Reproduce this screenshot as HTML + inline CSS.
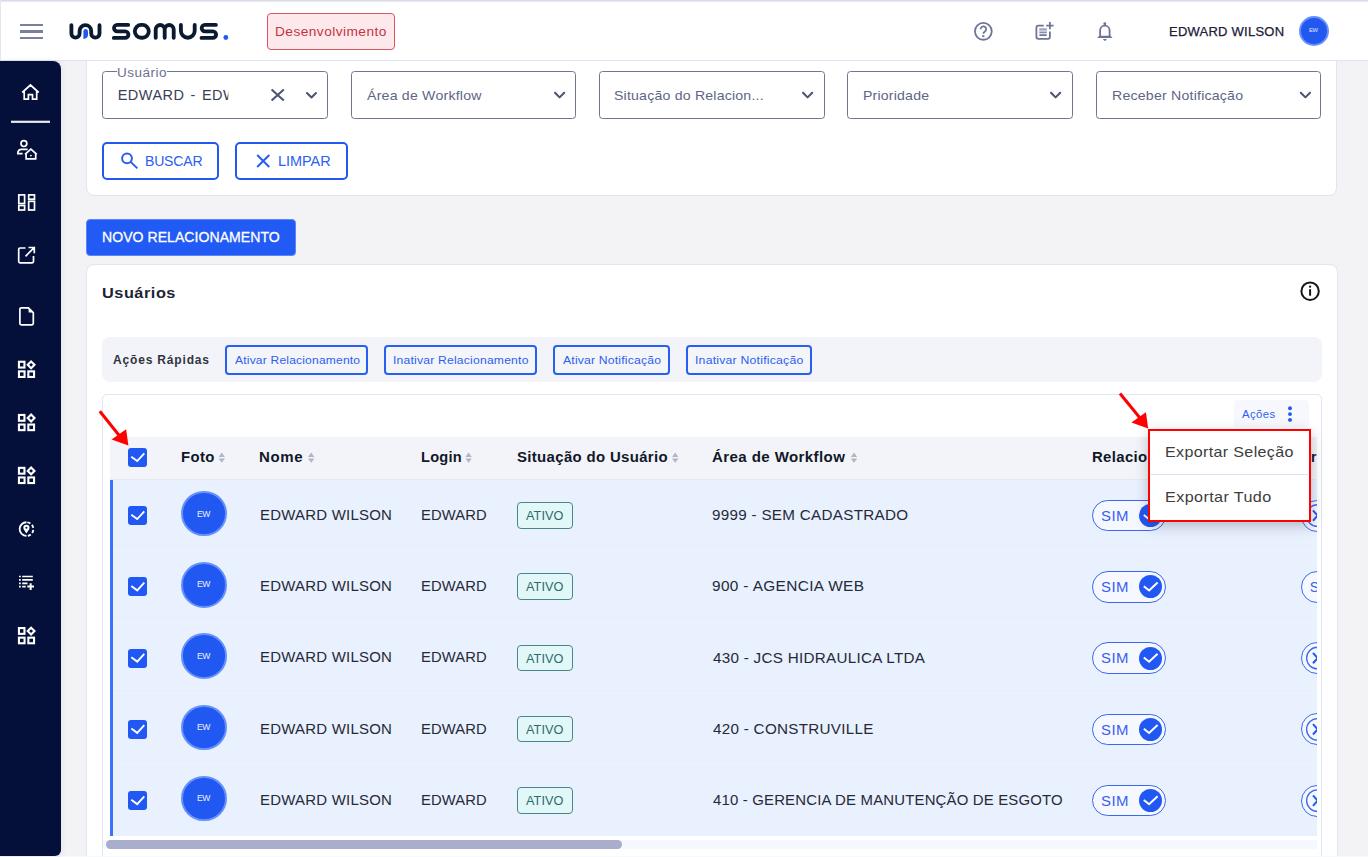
<!DOCTYPE html>
<html><head><meta charset="utf-8">
<style>
*{box-sizing:border-box;margin:0;padding:0}
html,body{width:1368px;height:857px;overflow:hidden;background:#f3f3f6;font-family:"Liberation Sans",sans-serif}
.a{position:absolute}
.t{position:absolute;white-space:nowrap;line-height:1}
svg{position:absolute;overflow:visible}
.hb{position:absolute;left:20px;width:23px;height:2.4px;background:#7a7f9e}
.card{position:absolute;background:#fff;border:1px solid #e0e4f5;border-radius:8px}
.sel{position:absolute;border:1px solid #6e7593;border-radius:3.5px;background:#fff;height:47.5px;top:71px;width:226px}
.btno{position:absolute;border:2px solid #2158f0;border-radius:5px;background:#fff}
.qb{position:absolute;top:345px;height:29.5px;border:2px solid #2660f3;border-radius:4px;background:#f4f5f9}
.row{position:absolute;left:110px;width:1207px;background:#e9f0fe}
.rbar{position:absolute;left:110px;width:3px;background:#3d72f7}
.cb{position:absolute;left:128px;width:19px;height:19px;border-radius:3px;background:#2158f3}
.av{position:absolute;left:181px;width:45.5px;height:45.5px;border-radius:50%;background:#2158f2;border:2px solid #6591f8}
.badge{position:absolute;left:517px;width:55.5px;height:26.5px;border:1px solid #4b8686;border-radius:4px;background:#e2f7f7}
.tog{position:absolute;left:1092px;width:74px;height:31.5px;border:1px solid #3a68f2;border-radius:16px;background:#f5f8ff}
.tgc{position:absolute;left:1138.5px;width:23px;height:23px;border-radius:50%;background:#2158f3}

</style></head><body>
<!-- ===== card 1 (filters) ===== -->
<div class="card" style="left:86px;top:-20px;width:1251px;height:215.5px"></div>
<div class="sel" style="left:102px"></div>
<div class="a" style="left:116.5px;top:69.5px;width:50.5px;height:4px;background:#fff"></div>
<div class="t" style="left:117.30px;top:66.80px;font-size:12.3px;color:#6b7290;letter-spacing:0.418px;transform:scaleX(1.1010);transform-origin:0 0;">Usuário</div>
<div class="t" style="left:117.65px;top:87.75px;font-size:14.5px;color:#3a3f55;letter-spacing:0.5px;word-spacing:1.5px;clip-path:inset(-4px calc(100% - 110.75px) -4px -4px);">EDWARD - EDWARD WILSON</div>
<svg style="left:0;top:0" width="1" height="1">
<g fill="none" stroke="#4b5170" stroke-width="2" stroke-linecap="butt">
<path d="M271.6,89.4 L283.8,100.6 M283.8,89.4 L271.6,100.6"/>
</g>
<g fill="none" stroke="#4b5170" stroke-width="2" stroke-linecap="round" stroke-linejoin="round">
<path d="M307,93 L311.5,97.5 L316,93"/>
</g>
</svg>
<div class="sel" style="left:350.5px;width:225.5px"></div>
<div class="t" style="left:366.60px;top:89.12px;font-size:13.5px;color:#5d6585;letter-spacing:0.208px;transform:scaleX(1.0460);transform-origin:0 0;">Área de Workflow</div>
<div class="sel" style="left:599px"></div>
<div class="t" style="left:614.31px;top:89.17px;font-size:13.5px;color:#5d6585;letter-spacing:0.185px;transform:scaleX(1.0467);transform-origin:0 0;">Situação do Relacion...</div>
<div class="sel" style="left:847px"></div>
<div class="t" style="left:863.16px;top:89.17px;font-size:13.5px;color:#5d6585;letter-spacing:0.187px;transform:scaleX(1.0440);transform-origin:0 0;">Prioridade</div>
<div class="sel" style="left:1095.5px;width:225.5px"></div>
<div class="t" style="left:1111.55px;top:89.18px;font-size:13.5px;color:#5d6585;letter-spacing:0.200px;transform:scaleX(1.0470);transform-origin:0 0;">Receber Notificação</div>
<svg style="left:0;top:0" width="1" height="1">
<g fill="none" stroke="#4b5170" stroke-width="2" stroke-linecap="round" stroke-linejoin="round">
<path d="M555,92.8 L559.6,97.4 L564.2,92.8"/>
<path d="M803,92.8 L807.6,97.4 L812.2,92.8"/>
<path d="M1051,92.8 L1055.6,97.4 L1060.2,92.8"/>
<path d="M1300.8,92.8 L1305.4,97.4 L1310,92.8"/>
</g>
</svg>

<div class="btno" style="left:102px;top:142px;width:117px;height:37.5px"></div>
<div class="t" style="left:145.09px;top:153.67px;font-size:14.5px;color:#2d5ff0;letter-spacing:-0.231px;transform:scaleX(0.9713);transform-origin:0 0;">BUSCAR</div>
<div class="btno" style="left:235px;top:142px;width:112.5px;height:37.5px"></div>
<div class="t" style="left:277.75px;top:153.67px;font-size:14.5px;color:#2d5ff0;letter-spacing:-0.016px;transform:scaleX(0.9976);transform-origin:0 0;">LIMPAR</div>
<svg style="left:0;top:0" width="1" height="1">
<g fill="none" stroke="#2a5cf0" stroke-width="2" stroke-linecap="butt">
<circle cx="127" cy="158.3" r="4.9"/>
<path d="M130.6,161.9 L137.4,168.4"/>
<path d="M257.2,155 L269.3,167 M269.3,155 L257.2,167"/>
</g>
</svg>

<!-- ===== NOVO btn ===== -->
<div class="a" style="left:86px;top:218.5px;width:210px;height:37.5px;background:#225af5;border:1px solid #5b86f7;border-radius:4px"></div>
<div class="t" style="left:101.84px;top:230.05px;font-size:14px;color:#ffffff;letter-spacing:0.031px;transform:scaleX(1.0048);transform-origin:0 0;-webkit-text-stroke:0.3px #fff;">NOVO RELACIONAMENTO</div>

<!-- ===== card 2 ===== -->
<div class="card" style="left:86px;top:264px;width:1251.5px;height:620px"></div>
<div class="t" style="left:101.51px;top:285.18px;font-size:15px;font-weight:700;color:#1e2433;letter-spacing:0.478px;transform:scaleX(1.0874);transform-origin:0 0;">Usuários</div>
<svg style="left:0;top:0" width="1" height="1">
<circle cx="1310.1" cy="291.2" r="8.7" fill="none" stroke="#151515" stroke-width="2"/>
<rect x="1309.1" y="289.2" width="2" height="6.5" fill="#151515"/>
<circle cx="1310.1" cy="286.7" r="1.15" fill="#151515"/>
</svg>

<div class="a" style="left:102px;top:337.3px;width:1219.5px;height:45px;background:#f3f4f9;border-radius:8px"></div>
<div class="t" style="left:113.05px;top:353.88px;font-size:12px;font-weight:700;color:#30343f;letter-spacing:0.829px;">Ações Rápidas</div>
<div class="qb" style="left:225.2px;width:143.3px"></div>
<div class="t" style="left:234.60px;top:355.20px;font-size:11.5px;color:#2d5ff0;letter-spacing:0.178px;transform:scaleX(1.0487);transform-origin:0 0;">Ativar Relacionamento</div>
<div class="qb" style="left:384px;width:153.4px"></div>
<div class="t" style="left:393.14px;top:355.20px;font-size:11.5px;color:#2d5ff0;letter-spacing:0.195px;transform:scaleX(1.0553);transform-origin:0 0;">Inativar Relacionamento</div>
<div class="qb" style="left:553.2px;width:116.7px"></div>
<div class="t" style="left:562.90px;top:355.20px;font-size:11.5px;color:#2d5ff0;letter-spacing:0.187px;transform:scaleX(1.0566);transform-origin:0 0;">Ativar Notificação</div>
<div class="qb" style="left:686.2px;width:125.4px"></div>
<div class="t" style="left:694.64px;top:355.20px;font-size:11.5px;color:#2d5ff0;letter-spacing:0.205px;transform:scaleX(1.0645);transform-origin:0 0;">Inativar Notificação</div>

<!-- table container -->
<div class="a" style="left:102px;top:394.4px;width:1219.5px;height:500px;background:#fff;border:1px solid #dfe5f6;border-radius:5px"></div>
<div class="a" style="left:1234px;top:399.6px;width:75px;height:27.4px;background:#f6f8fd;border-radius:4px"></div>
<div class="t" style="left:1242.00px;top:409.19px;font-size:10.5px;color:#2d5ff0;letter-spacing:0.356px;transform:scaleX(1.0803);transform-origin:0 0;">Ações</div>
<svg style="left:0;top:0" width="1" height="1">
<g fill="#2158f3"><circle cx="1290" cy="408.3" r="1.95"/><circle cx="1290" cy="414.1" r="1.95"/><circle cx="1290" cy="419.9" r="1.95"/></g>
</svg>

<!-- header row -->
<div class="a" style="left:110px;top:437px;width:1207px;height:42.5px;background:#f3f4f9;border-bottom:1px solid #e5e9f5"></div>
<div class="cb" style="top:448px"></div>
<svg style="left:0;top:0" width="1" height="1">
<path d="M131.3,456.75 L137.2,461.05 L144.3,453.3" fill="none" stroke="#fff" stroke-width="1.9"/>
</svg>
<div class="t" style="left:180.54px;top:449.85px;font-size:14px;font-weight:700;color:#111827;letter-spacing:0.382px;transform:scaleX(1.0637);transform-origin:0 0;">Foto</div>
<div class="t" style="left:259.43px;top:449.85px;font-size:14px;font-weight:700;color:#111827;letter-spacing:0.571px;transform:scaleX(1.0736);transform-origin:0 0;">Nome</div>
<div class="t" style="left:420.66px;top:449.85px;font-size:14px;font-weight:700;color:#111827;letter-spacing:0.245px;transform:scaleX(1.0422);transform-origin:0 0;">Login</div>
<div class="t" style="left:516.87px;top:449.85px;font-size:14px;font-weight:700;color:#111827;letter-spacing:0.315px;transform:scaleX(1.0677);transform-origin:0 0;">Situação do Usuário</div>
<div class="t" style="left:712.46px;top:449.85px;font-size:14px;font-weight:700;color:#111827;letter-spacing:0.369px;transform:scaleX(1.0761);transform-origin:0 0;">Área de Workflow</div>
<div class="t" style="left:1091.83px;top:449.65px;font-size:14px;font-weight:700;color:#111827;letter-spacing:0.329px;transform:scaleX(1.0653);transform-origin:0 0;">Relacionamento</div>
<div class="t" style="left:1311.00px;top:449.65px;font-size:14px;font-weight:700;color:#111827;">r</div>
<svg style="left:0;top:0" width="1" height="1">
<g fill="#aeb6c8">
<path d="M218.6,457 L221.8,452.6 L225,457 Z M218.6,458.4 L221.8,462.8 L225,458.4 Z"/>
<path d="M308,457 L311.2,452.6 L314.4,457 Z M308,458.4 L311.2,462.8 L314.4,458.4 Z"/>
<path d="M465.4,457 L468.6,452.6 L471.8,457 Z M465.4,458.4 L468.6,462.8 L471.8,458.4 Z"/>
<path d="M672,457 L675.2,452.6 L678.4,457 Z M672,458.4 L675.2,462.8 L678.4,458.4 Z"/>
<path d="M850.8,457 L854,452.6 L857.2,457 Z M850.8,458.4 L854,462.8 L857.2,458.4 Z"/>
</g>
</svg>

<div class="row" style="top:479.50px;height:71.26px"></div>
<div class="rbar" style="top:479.50px;height:71.56px"></div>
<div class="cb" style="top:506.05px"></div>
<svg style="left:0;top:0" width="1" height="1"><path d="M131.3,514.80 L137.2,519.10 L144.3,511.35" fill="none" stroke="#fff" stroke-width="1.9"/></svg>
<div class="av" style="top:490.85px"></div>
<div class="t" style="left:196.58px;top:509.60px;font-size:9px;color:#eef2fe;letter-spacing:-0.440px;transform:scaleX(0.9542);transform-origin:0 0;">EW</div>
<div class="t" style="left:259.51px;top:508.20px;font-size:14.5px;color:#262a38;letter-spacing:0.215px;transform:scaleX(1.0325);transform-origin:0 0;">EDWARD WILSON</div>
<div class="t" style="left:421.23px;top:508.20px;font-size:14.5px;color:#262a38;letter-spacing:0.142px;transform:scaleX(1.0174);transform-origin:0 0;">EDWARD</div>
<div class="badge" style="top:502.20px"></div>
<div class="t" style="left:526.40px;top:509.95px;font-size:12.5px;color:#2d6b6b;letter-spacing:0.089px;transform:scaleX(1.0150);transform-origin:0 0;">ATIVO</div>
<div class="t" style="left:712.21px;top:508.29px;font-size:14.5px;color:#262a38;letter-spacing:0.281px;transform:scaleX(1.0492);transform-origin:0 0;">9999 - SEM CADASTRADO</div>
<div class="tog" style="top:499.80px"></div>
<div class="tgc" style="top:504.05px"></div>
<svg style="left:0;top:0" width="1" height="1"><path d="M1143.8,515.05 L1149.1,519.25 L1157.6,511.15" fill="none" stroke="#fff" stroke-width="2"/></svg>
<div class="t" style="left:1100.80px;top:508.70px;font-size:14px;color:#3a5ef0;letter-spacing:0.469px;transform:scaleX(1.0652);transform-origin:0 0;">SIM</div>
<div class="a" style="left:1301.2px;top:499.60px;width:60px;height:32px;border:1px solid #3a68f2;border-radius:16px;background:#f5f8ff;clip-path:inset(-2px 43.8px -2px -2px)"></div>
<svg style="left:0;top:0;clip-path:inset(-1000px -1317px -1000px -1000px)" width="1" height="1"><circle cx="1317.4" cy="515.55" r="10.8" fill="none" stroke="#3a68f2" stroke-width="1.3"/><path d="M1313,510.35 L1317.6,515.55 L1313,520.75" fill="none" stroke="#2158f3" stroke-width="2"/></svg>
<div class="row" style="top:550.76px;height:71.26px"></div>
<div class="a" style="left:113px;top:550.26px;width:1204px;height:1px;background:#eef3fe"></div>
<div class="rbar" style="top:550.76px;height:71.56px"></div>
<div class="cb" style="top:577.31px"></div>
<svg style="left:0;top:0" width="1" height="1"><path d="M131.3,586.06 L137.2,590.36 L144.3,582.61" fill="none" stroke="#fff" stroke-width="1.9"/></svg>
<div class="av" style="top:562.11px"></div>
<div class="t" style="left:196.58px;top:580.33px;font-size:9px;color:#eef2fe;letter-spacing:-0.440px;transform:scaleX(0.9542);transform-origin:0 0;">EW</div>
<div class="t" style="left:259.51px;top:579.08px;font-size:14.5px;color:#262a38;letter-spacing:0.215px;transform:scaleX(1.0325);transform-origin:0 0;">EDWARD WILSON</div>
<div class="t" style="left:421.23px;top:579.08px;font-size:14.5px;color:#262a38;letter-spacing:0.142px;transform:scaleX(1.0174);transform-origin:0 0;">EDWARD</div>
<div class="badge" style="top:573.46px"></div>
<div class="t" style="left:526.40px;top:581.32px;font-size:12.5px;color:#2d6b6b;letter-spacing:0.089px;transform:scaleX(1.0150);transform-origin:0 0;">ATIVO</div>
<div class="t" style="left:712.20px;top:579.34px;font-size:14.5px;color:#262a38;letter-spacing:0.331px;transform:scaleX(1.0619);transform-origin:0 0;">900 - AGENCIA WEB</div>
<div class="tog" style="top:571.06px"></div>
<div class="tgc" style="top:575.31px"></div>
<svg style="left:0;top:0" width="1" height="1"><path d="M1143.8,586.31 L1149.1,590.51 L1157.6,582.41" fill="none" stroke="#fff" stroke-width="2"/></svg>
<div class="t" style="left:1100.80px;top:579.96px;font-size:14px;color:#3a5ef0;letter-spacing:0.469px;transform:scaleX(1.0652);transform-origin:0 0;">SIM</div>
<div class="a" style="left:1301px;top:570.76px;width:60px;height:32px;border:1px solid #3a68f2;border-radius:16px;background:#f5f8ff;clip-path:inset(-2px 44px -2px -2px)"></div>
<div class="t" style="left:1309.75px;top:580.03px;font-size:14px;color:#3a5ef0;clip-path:inset(-4px calc(100% - 7.25px) -4px -4px);">SIM</div>
<div class="row" style="top:622.02px;height:71.26px"></div>
<div class="a" style="left:113px;top:621.52px;width:1204px;height:1px;background:#eef3fe"></div>
<div class="rbar" style="top:622.02px;height:71.56px"></div>
<div class="cb" style="top:648.57px"></div>
<svg style="left:0;top:0" width="1" height="1"><path d="M131.3,657.32 L137.2,661.62 L144.3,653.87" fill="none" stroke="#fff" stroke-width="1.9"/></svg>
<div class="av" style="top:633.37px"></div>
<div class="t" style="left:196.58px;top:652.00px;font-size:9px;color:#eef2fe;letter-spacing:-0.440px;transform:scaleX(0.9542);transform-origin:0 0;">EW</div>
<div class="t" style="left:259.51px;top:650.46px;font-size:14.5px;color:#262a38;letter-spacing:0.215px;transform:scaleX(1.0325);transform-origin:0 0;">EDWARD WILSON</div>
<div class="t" style="left:421.23px;top:650.46px;font-size:14.5px;color:#262a38;letter-spacing:0.142px;transform:scaleX(1.0174);transform-origin:0 0;">EDWARD</div>
<div class="badge" style="top:644.72px"></div>
<div class="t" style="left:526.40px;top:653.05px;font-size:12.5px;color:#2d6b6b;letter-spacing:0.089px;transform:scaleX(1.0150);transform-origin:0 0;">ATIVO</div>
<div class="t" style="left:712.74px;top:650.87px;font-size:14.5px;color:#262a38;letter-spacing:0.259px;transform:scaleX(1.0502);transform-origin:0 0;">430 - JCS HIDRAULICA LTDA</div>
<div class="tog" style="top:642.32px"></div>
<div class="tgc" style="top:646.57px"></div>
<svg style="left:0;top:0" width="1" height="1"><path d="M1143.8,657.57 L1149.1,661.77 L1157.6,653.67" fill="none" stroke="#fff" stroke-width="2"/></svg>
<div class="t" style="left:1100.80px;top:651.40px;font-size:14px;color:#3a5ef0;letter-spacing:0.469px;transform:scaleX(1.0652);transform-origin:0 0;">SIM</div>
<div class="a" style="left:1301.2px;top:642.12px;width:60px;height:32px;border:1px solid #3a68f2;border-radius:16px;background:#f5f8ff;clip-path:inset(-2px 43.8px -2px -2px)"></div>
<svg style="left:0;top:0;clip-path:inset(-1000px -1317px -1000px -1000px)" width="1" height="1"><circle cx="1317.4" cy="658.07" r="10.8" fill="none" stroke="#3a68f2" stroke-width="1.3"/><path d="M1313,652.87 L1317.6,658.07 L1313,663.27" fill="none" stroke="#2158f3" stroke-width="2"/></svg>
<div class="row" style="top:693.28px;height:71.26px"></div>
<div class="a" style="left:113px;top:692.78px;width:1204px;height:1px;background:#eef3fe"></div>
<div class="rbar" style="top:693.28px;height:71.56px"></div>
<div class="cb" style="top:719.83px"></div>
<svg style="left:0;top:0" width="1" height="1"><path d="M131.3,728.58 L137.2,732.88 L144.3,725.13" fill="none" stroke="#fff" stroke-width="1.9"/></svg>
<div class="av" style="top:704.63px"></div>
<div class="t" style="left:196.58px;top:723.25px;font-size:9px;color:#eef2fe;letter-spacing:-0.440px;transform:scaleX(0.9542);transform-origin:0 0;">EW</div>
<div class="t" style="left:259.51px;top:721.80px;font-size:14.5px;color:#262a38;letter-spacing:0.215px;transform:scaleX(1.0325);transform-origin:0 0;">EDWARD WILSON</div>
<div class="t" style="left:421.23px;top:721.80px;font-size:14.5px;color:#262a38;letter-spacing:0.142px;transform:scaleX(1.0174);transform-origin:0 0;">EDWARD</div>
<div class="badge" style="top:715.98px"></div>
<div class="t" style="left:526.40px;top:723.73px;font-size:12.5px;color:#2d6b6b;letter-spacing:0.089px;transform:scaleX(1.0150);transform-origin:0 0;">ATIVO</div>
<div class="t" style="left:712.74px;top:721.89px;font-size:14.5px;color:#262a38;letter-spacing:0.271px;transform:scaleX(1.0492);transform-origin:0 0;">420 - CONSTRUVILLE</div>
<div class="tog" style="top:713.58px"></div>
<div class="tgc" style="top:717.83px"></div>
<svg style="left:0;top:0" width="1" height="1"><path d="M1143.8,728.83 L1149.1,733.03 L1157.6,724.93" fill="none" stroke="#fff" stroke-width="2"/></svg>
<div class="t" style="left:1100.80px;top:723.06px;font-size:14px;color:#3a5ef0;letter-spacing:0.469px;transform:scaleX(1.0652);transform-origin:0 0;">SIM</div>
<div class="a" style="left:1301.2px;top:713.38px;width:60px;height:32px;border:1px solid #3a68f2;border-radius:16px;background:#f5f8ff;clip-path:inset(-2px 43.8px -2px -2px)"></div>
<svg style="left:0;top:0;clip-path:inset(-1000px -1317px -1000px -1000px)" width="1" height="1"><circle cx="1317.4" cy="729.33" r="10.8" fill="none" stroke="#3a68f2" stroke-width="1.3"/><path d="M1313,724.13 L1317.6,729.33 L1313,734.53" fill="none" stroke="#2158f3" stroke-width="2"/></svg>
<div class="row" style="top:764.54px;height:71.26px"></div>
<div class="a" style="left:113px;top:764.04px;width:1204px;height:1px;background:#eef3fe"></div>
<div class="rbar" style="top:764.54px;height:71.56px"></div>
<div class="cb" style="top:791.09px"></div>
<svg style="left:0;top:0" width="1" height="1"><path d="M131.3,799.84 L137.2,804.14 L144.3,796.39" fill="none" stroke="#fff" stroke-width="1.9"/></svg>
<div class="av" style="top:775.89px"></div>
<div class="t" style="left:196.58px;top:794.12px;font-size:9px;color:#eef2fe;letter-spacing:-0.440px;transform:scaleX(0.9542);transform-origin:0 0;">EW</div>
<div class="t" style="left:259.51px;top:793.27px;font-size:14.5px;color:#262a38;letter-spacing:0.215px;transform:scaleX(1.0325);transform-origin:0 0;">EDWARD WILSON</div>
<div class="t" style="left:421.23px;top:793.27px;font-size:14.5px;color:#262a38;letter-spacing:0.142px;transform:scaleX(1.0174);transform-origin:0 0;">EDWARD</div>
<div class="badge" style="top:787.24px"></div>
<div class="t" style="left:526.40px;top:794.99px;font-size:12.5px;color:#2d6b6b;letter-spacing:0.089px;transform:scaleX(1.0150);transform-origin:0 0;">ATIVO</div>
<div class="t" style="left:712.74px;top:793.36px;font-size:14.5px;color:#262a38;letter-spacing:0.172px;transform:scaleX(1.0295);transform-origin:0 0;">410 - GERENCIA DE MANUTENÇÃO DE ESGOTO</div>
<div class="tog" style="top:784.84px"></div>
<div class="tgc" style="top:789.09px"></div>
<svg style="left:0;top:0" width="1" height="1"><path d="M1143.8,800.09 L1149.1,804.29 L1157.6,796.19" fill="none" stroke="#fff" stroke-width="2"/></svg>
<div class="t" style="left:1100.80px;top:793.74px;font-size:14px;color:#3a5ef0;letter-spacing:0.469px;transform:scaleX(1.0652);transform-origin:0 0;">SIM</div>
<div class="a" style="left:1301.2px;top:784.64px;width:60px;height:32px;border:1px solid #3a68f2;border-radius:16px;background:#f5f8ff;clip-path:inset(-2px 43.8px -2px -2px)"></div>
<svg style="left:0;top:0;clip-path:inset(-1000px -1317px -1000px -1000px)" width="1" height="1"><circle cx="1317.4" cy="800.59" r="10.8" fill="none" stroke="#3a68f2" stroke-width="1.3"/><path d="M1313,795.39 L1317.6,800.59 L1313,805.79" fill="none" stroke="#2158f3" stroke-width="2"/></svg>
<div class="a" style="left:1317px;top:437px;width:3.4px;height:400px;background:#fff"></div>

<!-- scrollbar -->
<div class="a" style="left:103px;top:835.8px;width:1217px;height:20px;background:#fff"></div>
<div class="a" style="left:103px;top:840px;width:1214px;height:9px;background:#f5f8fe"></div>
<div class="a" style="left:106.4px;top:840px;width:516px;height:8.8px;background:#a8aecb;border-radius:4.4px"></div>
<div class="a" style="left:61px;top:855.8px;width:1307px;height:1.2px;background:#f8f9fc"></div>

<!-- ===== dropdown ===== -->
<div class="a" style="left:1148.2px;top:429px;width:162.4px;height:92.5px;background:#fff;border:2.6px solid #f00;box-shadow:0 4px 12px rgba(40,45,70,0.28)"></div>
<div class="a" style="left:1150.8px;top:474px;width:157.2px;height:1px;background:#dde2f3"></div>
<div class="t" style="left:1165.06px;top:444.06px;font-size:15px;color:#3d3d3d;letter-spacing:0.330px;transform:scaleX(1.0702);transform-origin:0 0;">Exportar Seleção</div>
<div class="t" style="left:1165.05px;top:488.96px;font-size:15px;color:#3d3d3d;letter-spacing:0.367px;transform:scaleX(1.0771);transform-origin:0 0;">Exportar Tudo</div>

<!-- arrows -->
<svg style="left:0;top:0" width="1" height="1">
<g stroke="#f00" stroke-width="3" fill="#f00">
<path d="M99.8,411.2 L120,436.5"/>
<path d="M1120,393.5 L1140,418"/>
</g>
<path d="M128.4,445.6 L111.6,439.4 L126.1,429.2 Z" fill="#f00"/>
<path d="M1148.2,428.6 L1131.4,422.4 L1145.9,412.2 Z" fill="#f00"/>
</svg>

<!-- ===== header (top) ===== -->
<div class="a" style="left:0;top:0;width:1368px;height:61px;background:#fff;border-bottom:1px solid #dfe3f2"></div>
<div class="a" style="left:0;top:0;width:1368px;height:1px;background:#dcdde3"></div>
<div class="a" style="left:0;top:1px;width:1368px;height:1px;background:#e6e9f5"></div>
<div class="a" style="left:0;top:0;width:1px;height:61px;background:#e3e6f3"></div>
<div class="hb" style="top:23.8px"></div>
<div class="hb" style="top:30.3px"></div>
<div class="hb" style="top:36.7px"></div>
<svg style="left:0;top:0" width="1" height="1">
<g fill="none" stroke="#0b1a30" stroke-width="3.85" stroke-linecap="round" stroke-linejoin="round">
<path d="M71.4,25.2 V33.5 A4.1,4.1 0 0 0 79.6,33.5 V31 A5.8,5.8 0 0 1 91.2,31 V33.5 A4.15,4.15 0 0 0 99.5,33.5 V25.2"/>
<path d="M128.2,24.9 H117.2 A3.2,3.2 0 0 0 117.2,31.3 H125.1 A3.3,3.3 0 0 1 125.1,37.9 H113.8"/>
<rect x="134.8" y="24.9" width="14" height="12.8" rx="6.4"/>
<path d="M155.7,37.8 V29.5 A4.5,4.5 0 0 1 164.7,29.5 V37.8 M164.7,29.5 A4.5,4.5 0 0 1 173.7,29.5 V37.8"/>
<path d="M180.9,25 V30.8 A6.9,6.9 0 0 0 194.7,30.8 V25"/>
<path d="M215.9,24.9 H204.9 A3.2,3.2 0 0 0 204.9,31.3 H212.8 A3.3,3.3 0 0 1 212.8,37.9 H201.5"/>
</g>
<path d="M85.6,29 C87.2,29 88,30.2 88,31.8 V35 C88,37 86.2,38.9 83.4,38.9 V31.5 C83.4,30 84.2,29 85.6,29 Z" fill="#2357f5"/>
<circle cx="225.8" cy="37.5" r="2.4" fill="#2357f5"/>
</svg>
<div class="a" style="left:267px;top:13px;width:128px;height:36.5px;background:#fde9ec;border:1px solid #d6575d;border-radius:4px"></div>
<div class="t" style="left:275.30px;top:25.75px;font-size:12.5px;color:#c7343d;letter-spacing:0.400px;transform:scaleX(1.0977);transform-origin:0 0;">Desenvolvimento</div>

<svg style="left:0;top:0" width="1" height="1">
<g fill="none" stroke="#6e7598" stroke-width="1.8" stroke-linecap="butt" stroke-linejoin="round">
<circle cx="983.35" cy="31.35" r="8.4"/>
<path d="M980.6,29.3 A2.8,2.8 0 1 1 985.3,31.2 L983.5,32.9 V33.7"/>
<path d="M1043.8,25.7 H1038.4 A2,2 0 0 0 1036.4,27.7 V36.8 A2,2 0 0 0 1038.4,38.8 H1047.9 A2,2 0 0 0 1049.9,36.8 V31.6"/>
<path d="M1049.9,22 V29.3 M1046.2,25.7 H1053.6"/>
<path d="M1100.1,36.4 V30.45 A4.75,4.75 0 0 1 1109.6,30.45 V36.4"/>
</g>
<g stroke="#6e7598" stroke-width="1.7"><path d="M1039.4,29.4 H1046.7 M1039.4,32.3 H1046.7 M1039.4,35.1 H1046.7"/></g>
<rect x="1039.4" y="29.4" width="7.3" height="2.9" fill="#c3c7d6"/>
<g fill="#6e7598">
<rect x="982.2" y="35.2" width="2.2" height="1.9"/>
<path d="M1097.2,37.95 L1099.2,35.8 H1110.5 L1112.6,37.95 Z"/>
<rect x="1103.5" y="22.3" width="2.6" height="3" rx="1"/>
<path d="M1102.9,39.1 H1106.9 L1105.6,40.8 H1104.2 Z"/>
</g>
</svg>
<div class="t" style="left:1168.86px;top:25.70px;font-size:12.5px;color:#1b2036;letter-spacing:0.228px;transform:scaleX(1.0402);transform-origin:0 0;-webkit-text-stroke:0.25px #1b2036;">EDWARD WILSON</div>
<div class="a" style="left:1298.7px;top:15.9px;width:30.3px;height:30.3px;border-radius:50%;background:#2159f0;border:2px solid #6591f8"></div>
<div class="t" style="left:1309.22px;top:27.44px;font-size:6px;color:#e6ecfd;letter-spacing:-0.294px;transform:scaleX(0.9533);transform-origin:0 0;">EW</div>

<!-- ===== sidebar ===== -->
<div class="a" style="left:0;top:61px;width:61px;height:794.8px;background:#040f3a;border-radius:0 8px 6px 0;box-shadow:1px 0 6px rgba(30,40,50,0.07)"></div>
<svg style="left:0;top:0" width="1" height="1">
<g fill="none" stroke="#fff" stroke-width="1.7" stroke-linejoin="miter" stroke-linecap="butt">
<path d="M22.2,92.5 L30.45,85 L38.7,92.5 M24.2,91 V99.2 H28.4 V94.6 H32.5 V99.2 H36.7 V91"/>
<path d="M23.9,143.6 m-2.9,0 a2.9,2.9 0 1 0 5.8,0 a2.9,2.9 0 1 0 -5.8,0"/>
<path d="M27.6,149.4 H21.4 A3.6,3.6 0 0 0 17.8,153 V153.6 H22.6"/>
<path d="M25,154.3 L30.9,149.2 L36.8,154.3 M26.1,153.3 V158.8 H35.7 V153.3"/>
<rect x="18.8" y="194.9" width="5.8" height="8.6"/>
<rect x="28.7" y="194.9" width="5.8" height="4.3"/>
<rect x="18.8" y="205.5" width="5.8" height="4.5"/>
<rect x="28.7" y="201.3" width="5.8" height="8.7"/>
<path d="M25.5,248 H20 A1.3,1.3 0 0 0 18.7,249.3 V261.5 A1.3,1.3 0 0 0 20,262.8 H32.2 A1.3,1.3 0 0 0 33.5,261.5 V256 M28.5,247.5 H34.3 V253.3 M34.1,247.7 L25.5,256.3"/>
<path d="M28.4,307.8 H21.2 A1.3,1.3 0 0 0 19.9,309.1 V323.5 A1.3,1.3 0 0 0 21.2,324.8 H32 A1.3,1.3 0 0 0 33.3,323.5 V312.7 Z"/>
</g>
<rect x="28" y="194.6" width="1" height="1" fill="none"/>
<path d="M28.6,308 L33.2,312.6 H28.6 Z" fill="#fff"/>
<rect x="11" y="120.7" width="39" height="2.2" fill="#e9ebf3"/>
<circle cx="30.9" cy="155.6" r="0.9" fill="#fff"/>
</svg>
<svg style="left:0;top:0" width="1" height="1">
<g fill="none" stroke="#fff" stroke-width="2.1">
<g transform="translate(0,0)"><rect x="18.95" y="361.75" width="5.5" height="5.8"/><rect x="18.95" y="371.35" width="5.6" height="5.6"/><rect x="28.35" y="371.35" width="5.7" height="5.6"/><path d="M31.1,361.4 L34.5,364.8 L31.1,368.2 L27.7,364.8 Z"/></g>
<g transform="translate(0,53.2)"><rect x="18.95" y="361.75" width="5.5" height="5.8"/><rect x="18.95" y="371.35" width="5.6" height="5.6"/><rect x="28.35" y="371.35" width="5.7" height="5.6"/><path d="M31.1,361.4 L34.5,364.8 L31.1,368.2 L27.7,364.8 Z"/></g>
<g transform="translate(0,106.1)"><rect x="18.95" y="361.75" width="5.5" height="5.8"/><rect x="18.95" y="371.35" width="5.6" height="5.6"/><rect x="28.35" y="371.35" width="5.7" height="5.6"/><path d="M31.1,361.4 L34.5,364.8 L31.1,368.2 L27.7,364.8 Z"/></g>
<g transform="translate(0,266.3)"><rect x="18.95" y="361.75" width="5.5" height="5.8"/><rect x="18.95" y="371.35" width="5.6" height="5.6"/><rect x="28.35" y="371.35" width="5.7" height="5.6"/><path d="M31.1,361.4 L34.5,364.8 L31.1,368.2 L27.7,364.8 Z"/></g>
</g>
<g fill="none" stroke="#fff" stroke-width="1.8">
<path d="M26.5,522.25 A6.85,6.85 0 0 0 26.5,535.95"/>
<path d="M26.5,522.25 A6.85,6.85 0 0 1 26.5,535.95" stroke-dasharray="3.2 2.1" stroke-dashoffset="-0.9"/>
</g>
<path d="M26.4,524.7 A3.1,3.1 0 0 1 29.5,527.8 C29.5,529.6 27.6,531.6 26.4,533.6 C25.2,531.6 23.3,529.6 23.3,527.8 A3.1,3.1 0 0 1 26.4,524.7 Z M26.4,526.8 A1,1 0 1 0 26.4,528.8 A1,1 0 1 0 26.4,526.8 Z" fill="#fff" fill-rule="evenodd"/>
<g stroke="#fff" stroke-width="1.7" fill="none">
<path d="M19,576.5 H20.8 M19,579.9 H20.8 M19,583.3 H20.8 M19,586.7 H20.8"/>
<path d="M22.2,576.5 H32.8 M22.2,579.9 H32.8 M22.2,583.3 H27.5 M22.2,586.7 H25.7"/>
</g>
<path d="M27.3,586.5 H34 M30.65,583.2 V589.9" stroke="#fff" stroke-width="2" fill="none"/>
</svg>

</body></html>
